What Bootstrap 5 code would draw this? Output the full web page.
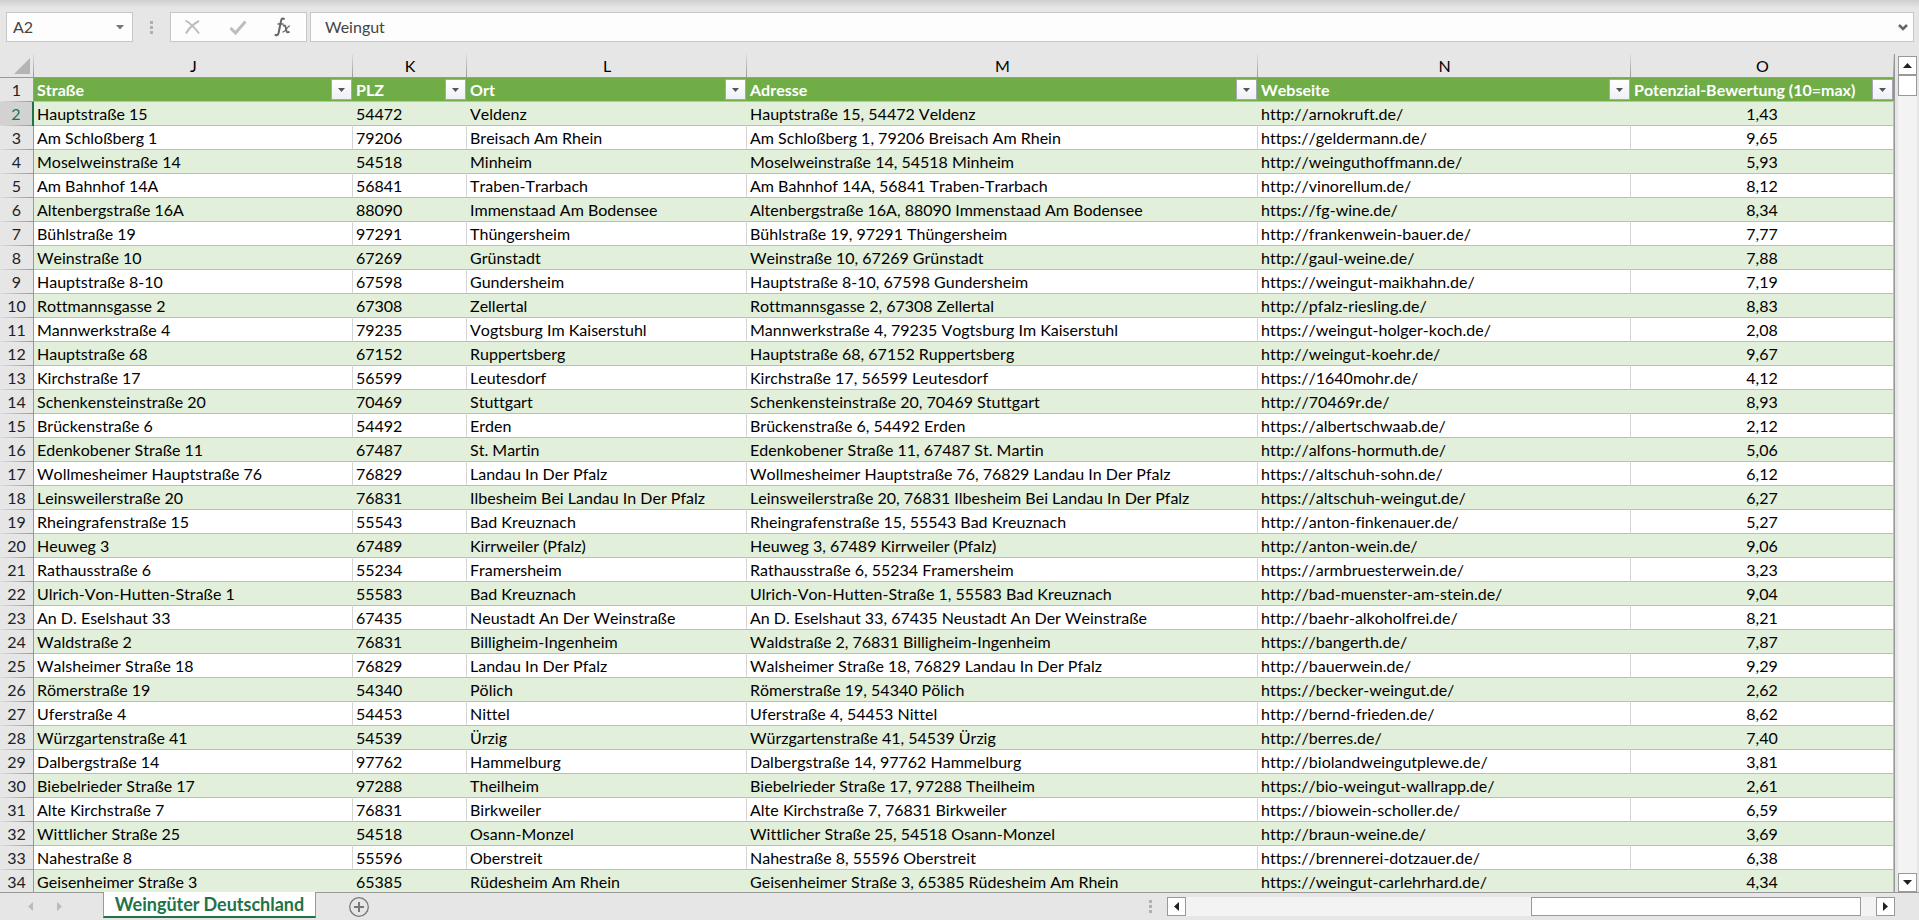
<!DOCTYPE html>
<html lang="de">
<head>
<meta charset="utf-8">
<meta name="viewport" content="width=device-width, initial-scale=1">
<title>Weingüter Deutschland</title>
<link href="https://cdn.jsdelivr.net/npm/bootstrap@5.3.0/dist/css/bootstrap.min.css" rel="stylesheet">
<style>
  :root {
    --chrome: #e6e6e6;
    --line: #999;
    --edge: #c6c6c6;
    --brand: #217346;
    --band: #e2efda;
    --rule: #a9d08e;
    --head: #70ad47;
  }
  body {
    font-family: Lato, "Liberation Sans", sans-serif;
    font-size: 16px;
    line-height: 23px;
    font-kerning: none;
    font-variant-ligatures: none;
    color: #000;
    background: var(--chrome);
  }
  button { padding: 0; border: 0; background: none; }
  svg { display: block; }

  /* formula bar */
  .formula-bar { padding: 12px 5px 12px 6px; background: linear-gradient(#cfcfcf, var(--chrome) 8px); }
  .field-box { height: 30px; background: #fdfdfd; border: 1px solid var(--edge); color: #444; }
  .field-box input { min-width: 0; border: 0; padding: 0 0 2px; background: transparent; color: inherit; outline: 0; }
  .name-box { width: 127px; padding: 0 8px 0 6px; }
  .tool-box { width: 137px; padding: 0 15px 0 13px; }
  .value-box { margin-left: 3px; padding: 0 5px 0 14px; }
  .bar-grip { width: 37px; }

  /* sheet */
  .sheet-view { min-height: 0; }
  .sheet-pane { min-width: 0; border-right: 1px solid var(--line); background: var(--chrome); }
  .sheet { table-layout: fixed; width: 100%; border-collapse: separate; border-spacing: 0; white-space: nowrap; }
  .sheet th, .sheet td { height: 24px; padding: 0; overflow: hidden; font-weight: 400; }
  .col-row { width: 34px; } .col-j { width: 319px; } .col-k { width: 114px; }
  .col-l { width: 280px; } .col-n { width: 373px; } .col-o { width: 263px; }
  .sheet .letters th {
    text-align: center;
    border-bottom: 1px solid var(--line);
    background: linear-gradient(#dcdcdc, #999) right / 1px 100% no-repeat;
  }
  .sheet .letters .corner { padding: 4px 3px 3px 14px; }
  .sheet .row-no {
    text-align: center;
    padding-bottom: 1px;
    color: #222;
    border-right: 1px solid var(--line);
    background: linear-gradient(90deg, #dcdcdc, #999) bottom / 100% 1px no-repeat;
  }
  .sheet .row-no.current { color: var(--brand); border-right: 2px solid var(--brand); background-color: #d2d2d2; }
  .sheet .field {
    padding-left: 3px;
    background: var(--head);
    color: #fff;
    font-weight: 700;
    border-bottom: 1px solid var(--rule);
  }
  .filter-btn {
    width: 21px; height: 21px; margin: 1px 1px 1px 0;
    border: 1px solid #a4a8b4;
    background: linear-gradient(#fff, #eff0f6);
  }
  .sheet .entry { padding-left: 3px; background: #fff; border-bottom: 1px solid var(--rule); border-right: 1px solid #d4d4d4; }
  .sheet .banded .entry { background: var(--band); border-right-color: var(--band); }
  .sheet .entry.score { padding-left: 0; text-align: center; border-right-color: var(--rule); }

  /* scroll bars and sheet tabs */
  .scroll-btn { width: 19px; height: 19px; flex: none; background: #fff; border: 1px solid var(--line); }
  .scroll-btn svg, .filter-btn svg { margin: auto; }
  .track { background: #f3f3f3; }
  .thumb { background: #fff; border: 1px solid var(--line); }
  .v-scroll { width: 24px; padding: 2px 2px 0 3px; }
  .v-scroll .thumb { height: 21px; }
  .tab-bar { height: 28px; border-top: 1px solid var(--line); }
  .tab-nav { width: 103px; padding-left: 28px; gap: 24px; }
  .sheet-tab {
    height: 26px; width: 213px; margin-top: -1px;
    background: #fff; color: var(--brand); font-weight: 700; font-size: 18px; line-height: 22px;
    border: solid var(--line); border-width: 0 1px; border-bottom: 2px solid var(--brand);
  }
  .add-tab { margin-left: 33px; }
  .tab-grip { width: 18px; }
  .h-scroll { width: 728px; height: 19px; margin-top: 4px; margin-right: 24px; }
  .h-scroll .track { padding-right: 15px; }
  .h-scroll .thumb { width: 330px; }
</style>
</head>
<body>
<div class="d-flex flex-column vh-100 overflow-hidden">

  <header class="formula-bar d-flex align-items-center">
    <div class="field-box name-box d-flex align-items-center">
      <input class="flex-grow-1" type="text" value="A2" aria-label="Namenfeld">
      <button type="button" aria-label="Namen anzeigen"><svg width="8" height="5"><path d="M0 0h8L4 4.500z" fill="#777"/></svg></button>
    </div>
    <div class="bar-grip d-flex justify-content-center"><svg width="3" height="13" fill="#b0b0b0"><path d="M0 0h3v3H0zM0 5h3v3H0zM0 10h3v3H0z"/></svg></div>
    <div class="field-box tool-box d-flex align-items-center justify-content-between">
      <button type="button" aria-label="Abbrechen"><svg width="17" height="16" viewBox="0 0 17 16" fill="none" stroke="#bdbdbd" stroke-width="2"><path d="M1.500 1.500C6 4 11 9 15 14.500M15 2C10 4.500 5 9 2 14.500"/></svg></button>
      <button type="button" aria-label="Eingeben"><svg width="18" height="15" viewBox="0 0 18 15" fill="none" stroke="#bdbdbd" stroke-width="3"><path d="M1.500 8l5 5L16.500 1.500"/></svg></button>
      <button type="button" aria-label="Funktion einfügen"><svg width="17" height="20" viewBox="0 0 17 20" fill="none" stroke="#666"><path d="M10.500 2.500C9.500 .8 7.600 1.200 7 4L4.700 15.500C4.300 18 2.500 19 .8 17.500" stroke-width="2"/><path d="M3.500 7h6" stroke-width="1.500"/><path d="M9 9c2-1.500 2.500 0 3 3s1.200 4.500 3.500 2.500" stroke-width="1.800"/><path d="M16 8.800c-2.500-.5-4 6.500-7.500 6.200" stroke-width="1.300"/></svg></button>
    </div>
    <div class="field-box value-box d-flex align-items-center flex-grow-1">
      <input class="flex-grow-1" type="text" value="Weingut" aria-label="Bearbeitungsleiste">
      <button type="button" aria-label="Bearbeitungsleiste erweitern"><svg width="10" height="7" fill="none" stroke="#666" stroke-width="2.500"><path d="M1 1l4 4 4-4"/></svg></button>
    </div>
  </header>

  <main class="sheet-view d-flex flex-grow-1">
    <div class="sheet-pane flex-grow-1 overflow-hidden">
      <table class="sheet">
        <colgroup><col class="col-row"><col class="col-j"><col class="col-k"><col class="col-l"><col><col class="col-n"><col class="col-o"></colgroup>
        <thead>
          <tr class="letters">
            <th class="corner"><svg width="16" height="16"><path d="M16 0v16H0z" fill="#b4b4b4"/></svg></th>
            <th>J</th><th>K</th><th>L</th><th>M</th><th>N</th><th>O</th>
          </tr>
          <tr id="fields"><th class="row-no">1</th></tr>
        </thead>
        <tbody id="rows"></tbody>
      </table>
    </div>
    <div class="v-scroll d-flex flex-column">
      <button type="button" class="scroll-btn" aria-label="Nach oben"><svg width="9" height="5"><path d="M4.500 0L9 5H0z" fill="#222"/></svg></button>
      <div class="track flex-grow-1"><div class="thumb"></div></div>
      <button type="button" class="scroll-btn" aria-label="Nach unten"><svg width="9" height="5"><path d="M0 0h9L4.500 5z" fill="#222"/></svg></button>
    </div>
  </main>

  <footer class="tab-bar d-flex flex-shrink-0">
    <div class="tab-nav d-flex align-items-center">
      <button type="button" aria-label="Vorheriges Blatt"><svg width="5" height="9"><path d="M5 0v9L0 4.500z" fill="#bbb"/></svg></button>
      <button type="button" aria-label="Nächstes Blatt"><svg width="5" height="9"><path d="M0 0v9l5-4.500z" fill="#bbb"/></svg></button>
    </div>
    <button type="button" class="sheet-tab">Weingüter Deutschland</button>
    <button type="button" class="add-tab me-auto" aria-label="Neues Blatt"><svg width="20" height="20" fill="none" stroke="#777"><circle cx="10" cy="10" r="9.300" stroke-width="1.300"/><path d="M10 5v10M5 10h10" stroke-width="2"/></svg></button>
    <div class="tab-grip d-flex align-items-center"><svg width="3" height="13" fill="#b0b0b0"><path d="M0 0h3v3H0zM0 5h3v3H0zM0 10h3v3H0z"/></svg></div>
    <div class="h-scroll d-flex">
      <button type="button" class="scroll-btn" aria-label="Nach links"><svg width="5" height="9"><path d="M5 0v9L0 4.500z" fill="#222"/></svg></button>
      <div class="track flex-grow-1 d-flex justify-content-end"><div class="thumb"></div></div>
      <button type="button" class="scroll-btn" aria-label="Nach rechts"><svg width="5" height="9"><path d="M0 0v9l5-4.500z" fill="#222"/></svg></button>
    </div>
  </footer>
</div>

<script>
  const fields = ["Straße", "PLZ", "Ort", "Adresse", "Webseite", "Potenzial-Bewertung (10=max)"];
  const data = `Hauptstraße 15|54472|Veldenz|http://arnokruft.de/|1,43
Am Schloßberg 1|79206|Breisach Am Rhein|https://geldermann.de/|9,65
Moselweinstraße 14|54518|Minheim|http://weinguthoffmann.de/|5,93
Am Bahnhof 14A|56841|Traben-Trarbach|http://vinorellum.de/|8,12
Altenbergstraße 16A|88090|Immenstaad Am Bodensee|https://fg-wine.de/|8,34
Bühlstraße 19|97291|Thüngersheim|http://frankenwein-bauer.de/|7,77
Weinstraße 10|67269|Grünstadt|http://gaul-weine.de/|7,88
Hauptstraße 8-10|67598|Gundersheim|https://weingut-maikhahn.de/|7,19
Rottmannsgasse 2|67308|Zellertal|http://pfalz-riesling.de/|8,83
Mannwerkstraße 4|79235|Vogtsburg Im Kaiserstuhl|https://weingut-holger-koch.de/|2,08
Hauptstraße 68|67152|Ruppertsberg|http://weingut-koehr.de/|9,67
Kirchstraße 17|56599|Leutesdorf|https://1640mohr.de/|4,12
Schenkensteinstraße 20|70469|Stuttgart|http://70469r.de/|8,93
Brückenstraße 6|54492|Erden|https://albertschwaab.de/|2,12
Edenkobener Straße 11|67487|St. Martin|http://alfons-hormuth.de/|5,06
Wollmesheimer Hauptstraße 76|76829|Landau In Der Pfalz|https://altschuh-sohn.de/|6,12
Leinsweilerstraße 20|76831|Ilbesheim Bei Landau In Der Pfalz|https://altschuh-weingut.de/|6,27
Rheingrafenstraße 15|55543|Bad Kreuznach|http://anton-finkenauer.de/|5,27
Heuweg 3|67489|Kirrweiler (Pfalz)|http://anton-wein.de/|9,06
Rathausstraße 6|55234|Framersheim|https://armbruesterwein.de/|3,23
Ulrich-Von-Hutten-Straße 1|55583|Bad Kreuznach|http://bad-muenster-am-stein.de/|9,04
An D. Eselshaut 33|67435|Neustadt An Der Weinstraße|http://baehr-alkoholfrei.de/|8,21
Waldstraße 2|76831|Billigheim-Ingenheim|https://bangerth.de/|7,87
Walsheimer Straße 18|76829|Landau In Der Pfalz|http://bauerwein.de/|9,29
Römerstraße 19|54340|Pölich|https://becker-weingut.de/|2,62
Uferstraße 4|54453|Nittel|http://bernd-frieden.de/|8,62
Würzgartenstraße 41|54539|Ürzig|http://berres.de/|7,40
Dalbergstraße 14|97762|Hammelburg|http://biolandweingutplewe.de/|3,81
Biebelrieder Straße 17|97288|Theilheim|https://bio-weingut-wallrapp.de/|2,61
Alte Kirchstraße 7|76831|Birkweiler|https://biowein-scholler.de/|6,59
Wittlicher Straße 25|54518|Osann-Monzel|http://braun-weine.de/|3,69
Nahestraße 8|55596|Oberstreit|https://brennerei-dotzauer.de/|6,38
Geisenheimer Straße 3|65385|Rüdesheim Am Rhein|https://weingut-carlehrhard.de/|4,34`;

  document.getElementById("fields").insertAdjacentHTML("beforeend", fields.map(f => `
    <th class="field"><div class="d-flex justify-content-between"><span>${f}</span>
      <button type="button" class="filter-btn flex-shrink-0" aria-label="${f} filtern"><svg width="7" height="4"><path d="M0 0h7L3.500 4z" fill="#555"/></svg></button></div></th>`).join(""));

  document.getElementById("rows").innerHTML = data.split("\n").map((line, i) => {
    const [street, zip, town, site, score] = line.split("|");
    const cells = [street, zip, town, `${street}, ${zip} ${town}`, site];
    return `<tr class="${i % 2 ? "" : "banded"}"><th class="row-no ${i ? "" : "current"}">${i + 2}</th>` +
      cells.map(c => `<td class="entry">${c}</td>`).join("") + `<td class="entry score">${score}</td></tr>`;
  }).join("");
</script>
<script src="https://cdn.jsdelivr.net/npm/bootstrap@5.3.0/dist/js/bootstrap.bundle.min.js"></script>
</body>
</html>
